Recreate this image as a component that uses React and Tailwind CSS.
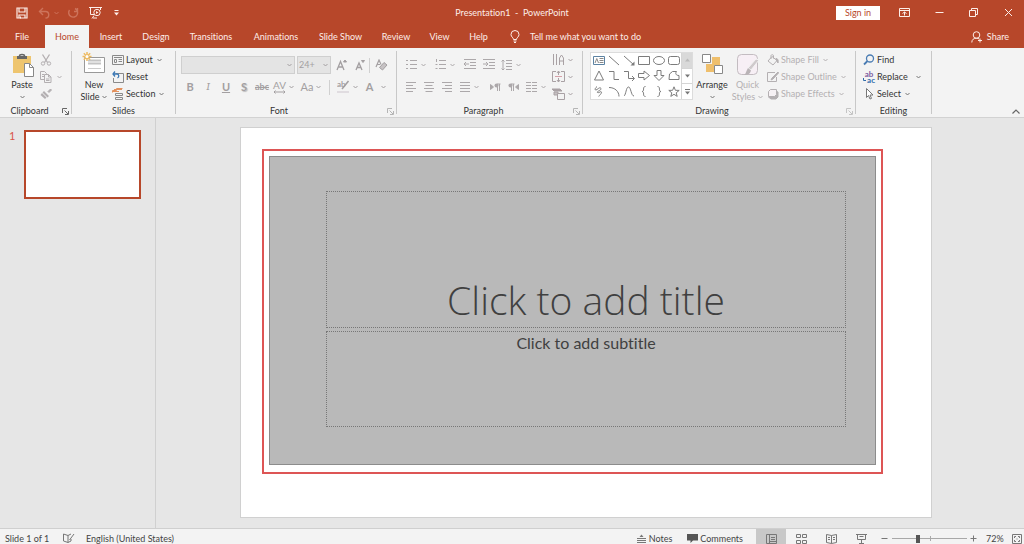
import React from "react";

function Svg({ w = 14, h = 14, className = "", children }) {
  return (
    <svg
      width={w}
      height={h}
      viewBox={`0 0 ${w} ${h}`}
      fill="none"
      stroke="currentColor"
      strokeWidth="1"
      aria-hidden="true"
      className={`shrink-0 ${className}`}
    >
      {children}
    </svg>
  );
}

function Chevron({ className = "" }) {
  return (
    <Svg w={5} h={4} className={className}>
      <path d="M.5 1l2 2 2-2" />
    </Svg>
  );
}

function Launcher({ className = "text-[#777]" }) {
  return (
    <button aria-label="More options" className={`absolute right-[2px] -bottom-px ${className}`}>
      <Svg w={7} h={7}>
        <path d="M.5 5V.5H5M2.500 2.500l3.500 3.500M6.500 3v3.500H3" />
      </Svg>
    </button>
  );
}

function Group({ label, width, launcher, children, labelClass = "" }) {
  return (
    <section aria-label={label} className={`relative my-[3px] flex shrink-0 flex-col border-r border-[#c8c8c8] ${width}`}>
      <div className="flex h-[51px] shrink-0">{children}</div>
      <div className={`pt-[3px] text-center text-[9px] leading-[12px] text-[#333] ${labelClass}`}>{label}</div>
      {launcher && <Launcher className={launcher} />}
    </section>
  );
}

function Tool({ label, width = "w-[18px]", children, className = "" }) {
  return (
    <button aria-label={label} className={`flex shrink-0 items-center justify-center gap-[3px] ${width} ${className}`}>
      {children}
    </button>
  );
}

function Row({ icon, label, chevron = true, muted = false, spread = false }) {
  return (
    <button className={`flex h-[17px] items-center gap-[2px] ${muted ? "text-[#b4b0b2]" : "text-[#333]"}`}>
      {icon}
      <span>{label}</span>
      {chevron && <Chevron className={`${spread ? "ml-[6px]" : "ml-[2px]"} ${muted ? "" : "text-[#777]"}`} />}
    </button>
  );
}

const tabs = [
  ["File", "w-[45px] pr-px"],
  ["Home", "w-[44px] bg-[#f3f3f3] text-[#b7472a]"],
  ["Insert", "w-[44px]"],
  ["Design", "w-[46px]"],
  ["Transitions", "w-[64px]"],
  ["Animations", "w-[66px]"],
  ["Slide Show", "w-[63px]"],
  ["Review", "w-[48px]"],
  ["View", "w-[39px]"],
  ["Help", "w-[39px]"],
];

function TitleBar() {
  return (
    <header className="grid h-[25px] grid-cols-[1fr_auto_1fr] items-center bg-[#b7472a] text-[#fdeee9]">
      <div className="flex items-center pl-[16px]">
        <button aria-label="Save">
          <Svg w={12} h={12}>
            <path d="M1 1h10v10H1zM3 1v4h6V1M3 11V8h6v3" strokeWidth="1.200" />
            <path d="M4.500 9.500v2" />
          </Svg>
        </button>
        <button aria-label="Undo" className="ml-[10px] flex items-center gap-[4px] text-[#cd735b]">
          <Svg w={12} h={12}>
            <path d="M5 1L1.500 4.500 5 8M1.500 4.500h6a3 3 0 010 6.500" strokeWidth="1.400" />
          </Svg>
          <Chevron />
        </button>
        <button aria-label="Repeat" className="ml-[8px] text-[#cd735b]">
          <Svg w={12} h={12}>
            <path d="M8 1.500A4.500 4.500 0 112.500 3M7 4.500h3.500V1" strokeWidth="1.400" />
          </Svg>
        </button>
        <button aria-label="Start from beginning" className="ml-[10px]">
          <Svg w={13} h={13}>
            <path d="M0 1.500h13M1.500 2v6.500H5M11.500 2v2M5 9.500L3 12.500M4 12h4" />
            <circle cx="8" cy="6.500" r="3.200" />
            <path d="M7 5l2.500 1.500L7 8z" fill="currentColor" stroke="none" />
          </Svg>
        </button>
        <button aria-label="Customize toolbar" className="ml-[12px]">
          <Svg w={5} h={6}>
            <path d="M.5 .5h4" />
            <path d="M0 2.500h5L2.500 5.500z" fill="currentColor" stroke="none" />
          </Svg>
        </button>
      </div>
      <h1 className="whitespace-pre text-[9px] leading-[12px]">Presentation1  -  PowerPoint</h1>
      <div className="flex items-center justify-end pr-[11px]">
        <button className="h-[14px] w-[44px] bg-white text-[9px] leading-[13px] text-[#b7472a]">Sign in</button>
        <button aria-label="Ribbon display options" className="ml-[19px]">
          <Svg w={11} h={9}>
            <path d="M.5 .5h10v8H.5zM.5 2.500h10M5.500 7.500V4M3.500 5.500l2-1.500 2 1.500" />
          </Svg>
        </button>
        <button aria-label="Minimize" className="ml-[25px]">
          <Svg w={9} h={9}>
            <path d="M.5 4.500h8" />
          </Svg>
        </button>
        <button aria-label="Restore" className="ml-[25px]">
          <Svg w={9} h={9}>
            <path d="M.5 2.500h6v6h-6zM2.500 2.500v-2h6v6h-2" />
          </Svg>
        </button>
        <button aria-label="Close" className="ml-[26px]">
          <Svg w={9} h={9}>
            <path d="M1 1l7 7M8 1L1 8" />
          </Svg>
        </button>
      </div>
    </header>
  );
}

function TabBar() {
  return (
    <nav aria-label="Ribbon tabs" className="flex h-[23px] bg-[#b7472a] text-[9px] text-[#fdeee9]">
      {tabs.map(([name, cls]) => (
        <button key={name} className={`shrink-0 text-center leading-[24px] ${cls}`}>
          {name}
        </button>
      ))}
      <button className="ml-[11px] flex items-center gap-[9px]">
        <Svg w={12} h={13}>
          <path d="M4.500 9.500c0-2-2.500-2.500-2.500-5a4 4 0 018 0c0 2.500-2.500 3-2.500 5zM4.500 11h3M5 12.500h2" />
        </Svg>
        Tell me what you want to do
      </button>
      <button className="mr-[15px] ml-auto flex items-center gap-[4px]">
        <Svg w={12} h={12}>
          <circle cx="5.500" cy="4" r="3.300" />
          <path d="M.8 11.500c0-3 2-4.300 4.700-4.300 1 0 2 .3 2.800.9M9 7.500v4M7 9.500h4" />
        </Svg>
        Share
      </button>
    </nav>
  );
}

function Clipboard() {
  return (
    <Group label="Clipboard" width="w-[72px]" launcher="text-[#666]" labelClass="pr-[12px]">
      <button className="ml-[10px] flex w-[24px] flex-col items-center">
        <Svg w={24} h={26}>
          <path d="M3 5h18v17H3z" fill="#eec56f" stroke="none" />
          <path d="M7 5h10v3H7z" fill="#666" stroke="none" />
          <path d="M9.500 5c0-2 5-2 5 0" stroke="#666" strokeWidth="1.500" />
          <path d="M14.500 12.500h5l4 4v9h-9z" fill="#fff" stroke="#888" />
          <path d="M19.500 12.500v4h4" stroke="#888" />
        </Svg>
        <span className="leading-[15px]">Paste</span>
        <Chevron className="mt-[3px] text-[#777]" />
      </button>
      <div className="ml-[6px] flex flex-col text-[#b3afb1]">
        <button aria-label="Cut" className="flex h-[17px] items-center">
          <Svg w={12} h={12}>
            <path d="M2.500 .5l5 8M9.500 .5l-5 8" strokeWidth="1.300" />
            <circle cx="3" cy="9.500" r="1.700" />
            <circle cx="9" cy="9.500" r="1.700" />
          </Svg>
        </button>
        <button aria-label="Copy" className="flex h-[17px] items-center gap-[5px]">
          <Svg w={12} h={12}>
            <path d="M4 8.500H.5v-8h4l2 2V4M2 3.500h2M2 5.500h2M4.500 3.500h4l2.500 2.500v5.500H4.500zM8.500 3.500V6H11M6 8h3.500M6 9.500h3.500" />
          </Svg>
          <Chevron />
        </button>
        <button aria-label="Format painter" className="flex h-[17px] items-center">
          <Svg w={12} h={12}>
            <path d="M8 3.500l2.500-2.500 1 1L9 4.500z" fill="currentColor" />
            <path d="M4 3l5 5-1.500 1.500-5-5zM2 5l4.500 4.500L5 11 .5 7z" fill="currentColor" stroke="none" />
          </Svg>
        </button>
      </div>
    </Group>
  );
}

function Slides() {
  return (
    <Group label="Slides" width="w-[104px]">
      <button className="ml-[7px] flex w-[30px] flex-col items-center">
        <Svg w={24} h={26}>
          <path d="M2.500 6.500h20v15h-20z" fill="#fff" stroke="#999" />
          <path d="M6 9.500h13M6 12.500h13" stroke="#c4c4c4" strokeWidth="2" />
          <path d="M6 17.500h13" stroke="#ccc" />
          <path d="M5 1v9M.5 5.500h9M1.800 2.300l6.400 6.400M8.200 2.300L1.800 8.700" stroke="#edbb62" strokeWidth="1.500" />
          <circle cx="5" cy="5.500" r="1.500" fill="#fff" stroke="none" />
        </Svg>
        <span className="leading-[15px]">New</span>
        <span className="flex items-center gap-[3px] leading-[9px]">
          Slide <Chevron className="text-[#777]" />
        </span>
      </button>
      <div className="ml-[3px] flex flex-col">
        <Row
          label="Layout"
          icon={
            <Svg w={12} h={12} className="text-[#8a8a8a]">
              <path d="M.5 1.500h11v9H.5zM2 3.500h8M2.500 5.500h2v3h-2zM6.500 5.500H10M6.500 7.500H10" />
            </Svg>
          }
        />
        <Row
          label="Reset"
          chevron={false}
          icon={
            <Svg w={12} h={12} className="text-[#8a8a8a]">
              <path d="M3.500 2.500h8v9h-10V7" />
              <path d="M3 .5L1 3l2 2.500M1 3h4c2 0 2.500 3 .5 4" stroke="#3b78b5" strokeWidth="1.300" />
            </Svg>
          }
        />
        <Row
          label="Section"
          icon={
            <Svg w={12} h={12} className="text-[#8a8a8a]">
              <path d="M3.500 5.500h7v2h-7zM3.500 9.500h7v2h-7z" />
              <path d="M.5 4.500v-2h4v-2h6M2 1.500h8M1 3.500h6" stroke="#e2905c" />
            </Svg>
          }
        />
      </div>
    </Group>
  );
}

function FontGroup() {
  return (
    <Group label="Font" width="w-[221px]" launcher="text-[#b5b5b5]" labelClass="pr-[14px]">
      <div className="flex flex-col pl-[5px] text-[#a39fa1]">
        <div className="mt-[5px] flex h-[18px] items-center">
          <div className="relative flex items-center">
            <select aria-label="Font name" disabled className="h-[18px] w-[114px] appearance-none border border-[#cfcfcf] bg-[#e4e4e4]">
              <option></option>
            </select>
            <Chevron className="absolute right-[3px]" />
          </div>
          <div className="relative ml-[2px] flex items-center">
            <select aria-label="Font size" disabled className="h-[18px] w-[34px] appearance-none border border-[#cfcfcf] bg-[#e4e4e4] pl-px text-[9px] opacity-100">
              <option>24+</option>
            </select>
            <Chevron className="absolute right-[3px]" />
          </div>
          <Tool label="Increase font size" width="ml-[2px] w-[18px]">
            <Svg w={12} h={12}>
              <path d="M1 11L4.500 2.500 8 11M2.200 8h4.600" strokeWidth="1.300" />
              <path d="M7.500 3L9 1l1.500 2z" fill="currentColor" />
            </Svg>
          </Tool>
          <Tool label="Decrease font size">
            <Svg w={12} h={12}>
              <path d="M2 11l3-7 3 7M3 8.500h4" strokeWidth="1.300" />
              <path d="M7.500 1.500h3L9 3.500z" fill="currentColor" />
            </Svg>
          </Tool>
          <span className="mr-[2px] h-[15px] w-px bg-[#d0d0d0]" />
          <Tool label="Clear formatting">
            <Svg w={13} h={12}>
              <path d="M1 8l3-7 2 4.500M2 5.500h3" strokeWidth="1.200" />
              <path d="M4.500 8.500l4.500-5 3 2.500-4.500 5z" fill="#c6c2c4" />
            </Svg>
          </Tool>
        </div>
        <div className="mt-[5px] flex h-[16px] items-center text-[11px]">
          <Tool label="Bold" className="font-bold">B</Tool>
          <Tool label="Italic" className="font-serif italic">I</Tool>
          <Tool label="Underline" className="font-bold underline">U</Tool>
          <Tool label="Shadow" className="font-bold [text-shadow:1px_1px_1px_#bbb]">S</Tool>
          <Tool label="Strikethrough" width="w-[18px]" className="text-[9px] font-bold line-through">abc</Tool>
          <Tool label="Character spacing" width="w-[25px]">
            <span className="flex flex-col items-center text-[10px] leading-[9px]">
              AV
              <Svg w={13} h={4}>
                <path d="M1 2h11M2.500 .5L1 2l1.500 1.500M10.500 .5L12 2l-1.500 1.500" />
              </Svg>
            </span>
            <Chevron />
          </Tool>
          <Tool label="Change case" width="w-[30px]">
            Aa
            <Chevron />
          </Tool>
          <span className="mx-[3px] h-[15px] w-px bg-[#d0d0d0]" />
          <Tool label="Text highlight color" width="w-[29px]">
            <Svg w={13} h={14}>
              <text x="0" y="7" fontSize="8" fontWeight="700" fill="currentColor" stroke="none">ab</text>
              <path d="M11.500 1L5 9" strokeWidth="1.500" />
              <path d="M0 12h12" stroke="#e0dce0" strokeWidth="2" />
            </Svg>
            <Chevron />
          </Tool>
          <Tool label="Font color" width="w-[28px]" className="gap-[8px]">
            <span className="font-bold">A</span>
            <Chevron />
          </Tool>
        </div>
      </div>
    </Group>
  );
}

function Lines({ d }) {
  return (
    <Svg w={12} h={12}>
      <path d={d} />
    </Svg>
  );
}

function Paragraph() {
  return (
    <Group label="Paragraph" width="w-[186px]" launcher="text-[#b5b5b5]" labelClass="pr-[12px]">
      <div className="flex w-[150px] flex-col pl-[4px] text-[#acA8aa]">
        <div className="mt-[5px] flex h-[18px] items-center">
          <Tool label="Bullets" width="w-[29px]">
            <Lines d="M0 1.500h2M0 5.500h2M0 9.500h2M4 1.500h7M4 5.500h7M4 9.500h7" />
            <Chevron />
          </Tool>
          <Tool label="Numbering" width="w-[29px]">
            <Lines d="M1.500 0v3M.5 5.500h2M.5 9.500h2M4 1.500h7M4 5.500h7M4 9.500h7" />
            <Chevron />
          </Tool>
          <Tool label="Decrease indent" width="ml-[2px] w-[18px]">
            <Lines d="M0 .5h12M6 3.500h6M6 6.500h6M0 9.500h12M0 5h5M2 3L0 5l2 2" />
          </Tool>
          <Tool label="Increase indent" width="w-[19px]">
            <Lines d="M0 .5h12M6 3.500h6M6 6.500h6M0 9.500h12M0 5h5M3 3l2 2-2 2" />
          </Tool>
          <Tool label="Line spacing" width="w-[26px]">
            <Lines d="M2 1v10M.5 2.500L2 1l1.500 1.500M.5 9.500L2 11l1.500-1.500M5 1.500h6M5 4.500h6M5 7.500h6M5 10.500h6" />
            <Chevron />
          </Tool>
        </div>
        <div className="mt-[5px] flex h-[16px] items-center">
          <Tool label="Align left" width="w-[19px]">
            <Lines d="M1 1.500h10M1 4.500h7M1 7.500h10M1 10.500h7" />
          </Tool>
          <Tool label="Center">
            <Lines d="M1 1.500h10M2.500 4.500h7M1 7.500h10M2.500 10.500h7" />
          </Tool>
          <Tool label="Align right">
            <Lines d="M1 1.500h10M4 4.500h7M1 7.500h10M4 10.500h7" />
          </Tool>
          <Tool label="Justify" width="w-[26px]">
            <Lines d="M1 1.500h10M1 4.500h10M1 7.500h10M1 10.500h10" />
            <Chevron />
          </Tool>
          <Tool label="Left to right" width="ml-[4px] w-[18px]">
            <Svg w={11} h={8}>
              <path d="M.5 1.500v5l3-2.500z" fill="currentColor" />
              <path d="M7.500 1v7M9.500 1v7M10.500 1H7" />
              <circle cx="6.500" cy="2.500" r="2" fill="currentColor" stroke="none" />
            </Svg>
          </Tool>
          <Tool label="Right to left">
            <Svg w={11} h={8}>
              <path d="M10.500 1.500v5L7.500 4z" fill="currentColor" />
              <path d="M3.500 1v7M5.500 1v7M6.500 1H3" />
              <circle cx="2.500" cy="2.500" r="2" fill="currentColor" stroke="none" />
            </Svg>
          </Tool>
          <Tool label="Columns" width="w-[28px]">
            <Lines d="M0 1.500h5M0 4.500h5M0 7.500h5M0 10.500h5M6 1.500h5M6 4.500h5M6 7.500h5M6 10.500h5" />
            <Chevron />
          </Tool>
        </div>
      </div>
      <div className="ml-[3px] flex flex-col text-[#a9a1a4]">
        <Tool label="Text direction" width="h-[17px] w-[25px]">
          <Svg w={13} h={13}>
            <path d="M1.500 1v11M4.500 1v11M7.500 12V5l2-3 2 3v7M7.500 8h4" />
          </Svg>
          <Chevron />
        </Tool>
        <Tool label="Align text" width="h-[17px] w-[25px]">
          <Svg w={13} h={13}>
            <path d="M4 1.500H.5v10H4M9 1.500h3.500v10H9M6.500 1v4M5 3l1.500-2L8 3M6.500 8v4M5 10l1.500 2L8 10" />
            <path d="M3 6.500h7" stroke="#d6a0a8" />
          </Svg>
          <Chevron />
        </Tool>
        <Tool label="Convert to SmartArt" width="h-[17px] w-[25px]">
          <Svg w={13} h={13}>
            <path d="M0 2h8l2 2H2z" fill="currentColor" />
            <path d="M2 5h4v3H2z" fill="#c4bfc1" />
            <path d="M5.500 6.500h7v6h-7z" fill="#f3f3f3" />
          </Svg>
          <Chevron />
        </Tool>
      </div>
    </Group>
  );
}

const shapes = [
  ["Text box", <><path d="M.5 1.500h11v8H.5z" stroke="#5c83a3" /><path d="M2 8l1.800-4.500L5.500 8M6.500 3.500h4M6.500 5.500h4M6.500 7.500h4" stroke="#888" /></>],
  ["Line", <path d="M1 1l10 9" />],
  ["Arrow", <><path d="M1 1l10 9" /><path d="M11.500 6.500v4H7.500z" fill="currentColor" stroke="none" /></>],
  ["Rectangle", <path d="M.5 1.500h11v8H.5z" />],
  ["Oval", <ellipse cx="6" cy="5.500" rx="5.500" ry="4" />],
  ["Rounded rectangle", <rect x=".5" y="1.500" width="11" height="8" rx="2" />],
  ["Triangle", <path d="M6 1l4.500 9h-9z" />],
  ["Elbow connector", <path d="M1 1.500h5v8h5" />],
  ["Elbow arrow", <path d="M1 1.500h4.500v7H11M9 6l2.500 2.500L9 11" />],
  ["Right arrow", <path d="M.5 3.500H6V1l5.500 4.500L6 10V7.500H.5z" />],
  ["Down arrow", <path d="M4 .5h4v5h3L6 10.500 1 5.500h3z" />],
  ["Freeform", <path d="M1 9.500L1.500 4l3-2.500h4C7 3.500 8 5.500 11 5.500v4z" />],
  ["Scribble", <path d="M4 .5C1 3 2 5 4 3.500S7 1 8 2.500 3 5.500 4.500 6.500 8 4.500 8.500 6 5 10.500 6 10.500" />],
  ["Arc", <path d="M1 1.500c6 0 10 4 10 9" />],
  ["Curve", <path d="M1 10C3 9 3 1 5.500 1S8 10 11 10" />],
  ["Left brace", <path d="M7.500 .5C4 .5 7 5.500 4 5.500c3 0 0 5 3.500 5" />],
  ["Right brace", <path d="M4.500 .5C8 .5 5 5.500 8 5.500c-3 0 0 5-3.500 5" />],
  ["Star", <path d="M6 .8l1.400 3.500 3.800.1-3 2.400 1 3.600L6 8.300l-3.200 2.100 1-3.600-3-2.400 3.800-.1z" />],
];

function Drawing() {
  return (
    <Group label="Drawing" width="w-[273px]" launcher="text-[#c4c4c4]" labelClass="pr-[14px]">
      <div className="mt-px ml-[7px] flex h-[48px] w-[103px] border border-[#dcdcdc] bg-white">
        <div className="grid flex-1 grid-cols-6 grid-rows-3 text-[#7c7c7c]">
          {shapes.map(([name, drawing]) => (
            <button key={name} aria-label={name} className="flex items-center justify-center">
              <Svg w={12} h={11}>{drawing}</Svg>
            </button>
          ))}
        </div>
        <div className="flex w-[11px] flex-col divide-y divide-[#d5d5d5] border-l border-[#d5d5d5] text-[#777]">
          <button aria-label="Scroll up" className="flex flex-1 items-center justify-center bg-[#d9d9d9] text-[#bbb]">
            <Svg w={5} h={4}>
              <path d="M0 3.500h5L2.500 .5z" fill="currentColor" stroke="none" />
            </Svg>
          </button>
          <button aria-label="Scroll down" className="flex flex-1 items-center justify-center">
            <Svg w={5} h={4}>
              <path d="M0 .5h5L2.500 3.500z" fill="currentColor" stroke="none" />
            </Svg>
          </button>
          <button aria-label="More shapes" className="flex flex-1 items-center justify-center">
            <Svg w={5} h={6}>
              <path d="M0 .5h5" />
              <path d="M0 2.500h5L2.500 5.500z" fill="currentColor" stroke="none" />
            </Svg>
          </button>
        </div>
      </div>
      <button className="ml-[2px] flex w-[34px] flex-col items-center">
        <Svg w={22} h={26}>
          <path d="M11 6h8v8h-8zM5 13h8v8H5z" fill="#efbf6c" stroke="none" />
          <path d="M1.500 3.500h8v8h-8zM13.500 14.500h8v8h-8z" fill="#fff" stroke="#888" />
        </Svg>
        <span className="leading-[15px]">Arrange</span>
        <Chevron className="mt-[3px] text-[#777]" />
      </button>
      <button className="ml-[3px] flex w-[31px] flex-col items-center text-[#b4b0b2]">
        <Svg w={24} h={26}>
          <rect x="1.500" y="3.500" width="20" height="20" rx="4" fill="#f7eff5" stroke="#c3bcc1" />
          <path d="M23 9l-8 10-3-2 8-9z" fill="#cfc9cc" stroke="#f3f3f3" />
          <path d="M12 17l3 2.500c-1 4-4 4.500-7 4.500 2-1 2-4 4-7z" fill="#b9b3b6" stroke="none" />
        </Svg>
        <span className="leading-[15px]">Quick</span>
        <span className="flex items-center gap-[3px] leading-[9px]">
          Styles <Chevron />
        </span>
      </button>
      <div className="ml-[4px] flex flex-col">
        <Row
          muted
          label="Shape Fill"
          icon={
            <Svg w={12} h={12}>
              <path d="M5 2.500l5 4-4 4.500-5-4zM4 5V1.500C4 .5 6.500 .5 6.500 1.500v3" />
              <path d="M9 4.500c2 0 2.500 2 2 4.500l-1.500-2.500z" fill="currentColor" />
            </Svg>
          }
        />
        <Row
          muted
          label="Shape Outline"
          icon={
            <Svg w={12} h={12}>
              <path d="M8 1.500H.5v9h9V6" />
              <path d="M11 1L5 7 4 9l2-1 5.500-6z" fill="currentColor" />
            </Svg>
          }
        />
        <Row
          muted
          label="Shape Effects"
          icon={
            <Svg w={12} h={12}>
              <path d="M3 8.500h5.500V3l2.500 1v5L9 11H4L1.500 9z" fill="currentColor" />
              <path d="M3.500 1.500h6v5l-2 2h-6v-5z" fill="#f6f1f4" />
            </Svg>
          }
        />
      </div>
    </Group>
  );
}

function ReplaceIcon() {
  return (
    <span aria-hidden="true" className="flex w-[12px] flex-col text-[8px] leading-[6px] font-bold">
      <span className="h-[6px] text-[#7b5aa0]">ab</span>
      <span className="flex h-[6px] items-start justify-between text-[#2f6cab]">
        <Svg w={3} h={5}>
          <path d="M.5 1v2.500H3" />
        </Svg>
        ac
      </span>
    </span>
  );
}

function Editing() {
  return (
    <Group label="Editing" width="w-[76px]">
      <div className="flex flex-col pl-[7px]">
        <Row
          label="Find"
          chevron={false}
          icon={
            <Svg w={12} h={12} className="text-[#4a7cb3]">
              <circle cx="7" cy="4.500" r="3.500" strokeWidth="1.300" />
              <path d="M4.500 7L1 10.500" strokeWidth="1.800" />
            </Svg>
          }
        />
        <Row label="Replace" spread icon={<ReplaceIcon />} />
        <Row
          label="Select"
          icon={
            <Svg w={12} h={12} className="text-[#777]">
              <path d="M3.500 .5v9l2-2L7 11l1.500-.6-1.500-3.400h3z" fill="#fff" />
            </Svg>
          }
        />
      </div>
    </Group>
  );
}

function Ribbon() {
  return (
    <div className="flex h-[70px] border-b border-[#d2d2d2] bg-[#f3f3f3] text-[9px] leading-[12px] text-[#333]">
      <Clipboard />
      <Slides />
      <FontGroup />
      <Paragraph />
      <Drawing />
      <Editing />
      <button aria-label="Collapse the ribbon" className="mr-[4px] mb-[3px] ml-auto self-end text-[#666]">
        <Svg w={8} h={5}>
          <path d="M.5 4.500L4 1l3.500 3.500" strokeWidth="1.200" />
        </Svg>
      </button>
    </div>
  );
}

function Workspace() {
  return (
    <div className="flex flex-1 bg-[#e6e6e6]">
      <aside aria-label="Slide thumbnails" className="flex w-[156px] shrink-0 items-start border-r border-[#d0d0d0] pt-[12px] pl-[9px] text-[#d9544a]">
        <span className="w-[15px] text-[11px] leading-[12px]">1</span>
        <button aria-label="Slide 1" className="h-[69px] w-[117px] border-2 border-[#b7472a] bg-white" />
      </aside>
      <main className="flex-1 pt-[9px] pr-[92px] pb-[10px] pl-[84px]">
        <div className="flex h-full flex-col border border-[#d0d0d0] bg-white pt-[21px] pr-[48px] pb-[43px] pl-[21px]">
          <div className="flex min-h-[324px] flex-1 border-2 border-[#dd5555] p-[5px] pb-[7px]">
            <div className="flex flex-1 flex-col gap-[3px] border border-[#8c8c8c] bg-[#b9b9b9] pt-[34px] pr-[29px] pb-[37px] pl-[56px] text-center text-[#404040]">
              <div className="flex h-[137px] items-end justify-center border border-dotted border-[#777]">
                <h2 className="font-['Open_Sans',sans-serif] text-[39px] leading-[54px] font-light">Click to add title</h2>
              </div>
              <div className="flex-1 border border-dotted border-[#777]">
                <p className="text-[16px] leading-[22px]">Click to add subtitle</p>
              </div>
            </div>
          </div>
        </div>
      </main>
    </div>
  );
}

function StatusBar() {
  return (
    <footer className="flex h-[16px] items-center border-t border-[#cfcfcf] bg-[#f3f3f3] pt-[4px] pr-[2px] text-[9px] leading-[11px] text-[#444]">
      <span className="w-[63px] pl-[5px]">Slide 1 of 1</span>
      <button aria-label="Spelling" className="w-[19px] text-[#777]">
        <Svg w={12} h={11}>
          <path d="M5 2.500v7M5 2.500L.5 1v7L5 9.500l3-1.500V6M5 2.500L8 1M11 1L6.500 7" />
        </Svg>
      </button>
      <button className="pl-[4px]">English (United States)</button>
      <div className="ml-auto flex items-center text-[#777]">
        <button className="flex items-center gap-[3px]">
          <Svg w={9} h={9}>
            <path d="M0 4.500h9M0 6.500h9M0 8.500h9" />
            <path d="M2.500 3h4L4.500 .5z" fill="currentColor" stroke="none" />
          </Svg>
          <span className="text-[#444]">Notes</span>
        </button>
        <button className="ml-[15px] flex items-center gap-[2px]">
          <Svg w={11} h={9}>
            <path d="M0 0h11v6.500H6L3.500 9V6.500H0z" fill="#555" stroke="none" />
          </Svg>
          <span className="text-[#444]">Comments</span>
        </button>
        <button aria-label="Normal view" className="-mt-[4px] ml-[13px] flex h-[15px] w-[30px] items-center justify-center bg-[#c8c8c8] pt-[4px]">
          <Svg w={11} h={10}>
            <path d="M.5 .5h10v9H.5zM3.500 .5v9M5 3.500h4M5 5.500h4M3.500 7.500h7" />
          </Svg>
        </button>
        <button aria-label="Slide sorter" className="ml-[10px]">
          <Svg w={11} h={10}>
            <path d="M.5 .5h4v3h-4zM6.500 .5h4v3h-4zM.5 6.500h4v3h-4zM6.500 6.500h4v3h-4z" />
          </Svg>
        </button>
        <button aria-label="Reading view" className="ml-[19px]">
          <Svg w={11} h={10}>
            <path d="M5.500 1.500L.5 .5v8l5 1 5-1v-8zM5.500 1.500v8M2 3.500h2M2 5.500h2M7 3.500h2M7 5.500h2" />
          </Svg>
        </button>
        <button aria-label="Slide show" className="ml-[19px]">
          <Svg w={11} h={10}>
            <path d="M0 .5h11M1.500 .5v5h8v-5M5.500 5.500v4M3 9.500h5M3.500 2.500h4" />
          </Svg>
        </button>
        <button aria-label="Zoom out" className="ml-[14px]">
          <Svg w={7} h={7}>
            <path d="M.5 3.500h6" />
          </Svg>
        </button>
        <div className="relative ml-[4px] flex">
          <span className="absolute top-[2px] left-1/2 h-[5px] w-px bg-[#aaa]" />
          <input
            type="range"
            aria-label="Zoom"
            min="0"
            max="100"
            defaultValue="34"
            className="relative h-[9px] w-[75px] appearance-none bg-[linear-gradient(#a8a8a8,#a8a8a8)] bg-[length:100%_1px] bg-center bg-no-repeat [&::-webkit-slider-thumb]:h-[8px] [&::-webkit-slider-thumb]:w-[4px] [&::-webkit-slider-thumb]:appearance-none [&::-webkit-slider-thumb]:bg-[#555]"
          />
        </div>
        <button aria-label="Zoom in" className="ml-[3px]">
          <Svg w={7} h={7}>
            <path d="M.5 3.500h6M3.500 .5v6" />
          </Svg>
        </button>
        <button className="ml-[9px] w-[18px] text-left text-[#444]">72%</button>
        <button aria-label="Fit slide to window" className="ml-[8px]">
          <Svg w={10} h={10}>
            <path d="M.5 .5h9v9h-9z" />
            <path d="M2.500 4V2.500H4M6 2.500h1.500V4M7.500 6v1.500H6M4 7.500H2.500V6M4.500 5h1" />
          </Svg>
        </button>
      </div>
    </footer>
  );
}

export default function App() {
  return (
    <div className="flex min-h-screen flex-col font-['Lato','Open_Sans',sans-serif] [font-variant-ligatures:none]">
      <TitleBar />
      <TabBar />
      <Ribbon />
      <Workspace />
      <StatusBar />
    </div>
  );
}
